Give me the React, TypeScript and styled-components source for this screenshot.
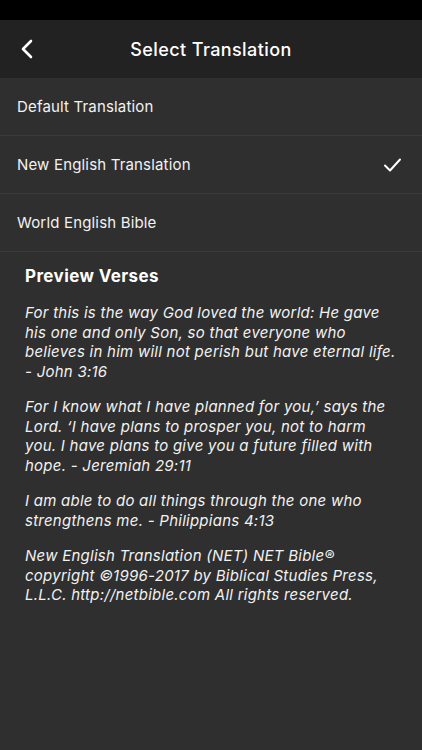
import React from "react";
import styled, { createGlobalStyle } from "styled-components";

const Global = createGlobalStyle`
  html, body { margin: 0; padding: 0; background: #2f2f2f; }
  body { font-family: Inter, "Liberation Sans", Arial, sans-serif; -webkit-font-smoothing: antialiased; }
  * { box-sizing: border-box; }
`;

const Screen = styled.div`
  width: 422px;
  min-height: 750px;
  background: #2f2f2f;
  display: flex;
  flex-direction: column;
  color: #ffffff;
`;

const StatusBar = styled.div`
  height: 20px;
  background: #000000;
`;

const Header = styled.header`
  height: 58px;
  background: #222222;
  display: flex;
  align-items: center;
  justify-content: center;
  position: relative;
`;

const BackButton = styled.button`
  position: absolute;
  left: 16px;
  top: 50%;
  transform: translateY(-50%);
  background: none;
  border: 0;
  padding: 4px;
  display: flex;
  color: #fff;
`;

const Title = styled.h1`
  margin: 0;
  font-size: 18px;
  font-weight: 500;
  letter-spacing: 0.4px;
`;

const List = styled.ul`
  list-style: none;
  margin: 0;
  padding: 0;
`;

const Row = styled.li`
  height: 58px;
  display: flex;
  align-items: center;
  justify-content: space-between;
  padding: 0 20px 0 17px;
  border-bottom: 1px solid #3a3a3a;
  font-size: 15px;
  letter-spacing: 0.17px;
  color: #f2f2f2;
`;

const Preview = styled.section`
  padding: 12px 22px 0 25px;
`;

const PreviewTitle = styled.h2`
  margin: 0 0 15px 0;
  font-size: 17px;
  font-weight: 700;
  line-height: 24px;
  letter-spacing: 0.4px;
`;

const Verse = styled.p`
  margin: 0 0 16px 0;
  font-size: 15px;
  font-style: italic;
  line-height: 19.5px;
  letter-spacing: 0.25px;
  color: #f2f2f2;
`;

const translations = [
  { name: "Default Translation", selected: false },
  { name: "New English Translation", selected: true },
  { name: "World English Bible", selected: false },
];

const verses = [
  "For this is the way God loved the world: He gave his one and only Son, so that everyone who believes in him will not perish but have eternal life. - John 3:16",
  "For I know what I have planned for you,\u2019 says the Lord. \u2018I have plans to prosper you, not to harm you. I have plans to give you a future filled with hope. - Jeremiah 29:11",
  "I am able to do all things through the one who strengthens me. - Philippians 4:13",
  "New English Translation (NET) NET Bible\u00ae copyright \u00a91996-2017 by Biblical Studies Press, L.L.C. http://netbible.com All rights reserved.",
];

export default function App() {
  return (
    <>
      <Global />
      <Screen>
        <StatusBar />
        <Header>
          <BackButton aria-label="Back">
            <svg width="14" height="20" viewBox="0 0 14 20" fill="none">
              <path d="M11 2 L3 10 L11 18" stroke="#fff" strokeWidth="2.6" strokeLinecap="round" strokeLinejoin="round" />
            </svg>
          </BackButton>
          <Title>Select Translation</Title>
        </Header>
        <List>
          {translations.map((t) => (
            <Row key={t.name}>
              <span>{t.name}</span>
              {t.selected && (
                <svg width="19" height="16" viewBox="0 0 19 16" fill="none">
                  <path d="M2 8.5 L7 13.5 L17 2.5" stroke="#fff" strokeWidth="2" strokeLinecap="round" strokeLinejoin="round" />
                </svg>
              )}
            </Row>
          ))}
        </List>
        <Preview>
          <PreviewTitle>Preview Verses</PreviewTitle>
          {verses.map((v, i) => (
            <Verse key={i}>{v}</Verse>
          ))}
        </Preview>
      </Screen>
    </>
  );
}
